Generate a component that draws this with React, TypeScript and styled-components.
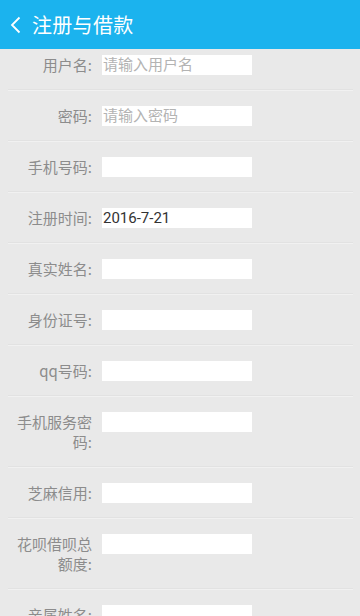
import React from "react";
import styled, { createGlobalStyle } from "styled-components";

const GlobalStyle = createGlobalStyle`
  html, body {
    margin: 0;
    padding: 0;
    background: #e9e9e9;
    font-family: "Roboto", "Noto Sans CJK SC", sans-serif;
  }
  body {
    height: 616px;
    overflow: hidden;
  }
`;

const Page = styled.div`
  width: 360px;
  min-height: 616px;
  background: #e9e9e9;
`;

const Header = styled.header`
  height: 49px;
  background: #1bb3ee;
  display: flex;
  align-items: center;
  padding-left: 10px;
  gap: 11px;
  color: #fff;
`;

const Title = styled.h1`
  margin: 0;
  font-size: 20px;
  font-weight: normal;
  font-family: "Noto Sans CJK SC", sans-serif;
  letter-spacing: 0.3px;
`;

const Form = styled.div`
  display: flex;
  flex-direction: column;
`;

const Row = styled.div<{ $first?: boolean }>`
  display: flex;
  align-items: flex-start;
  margin: 0 7px 0 8px;
  padding: ${(p) => (p.$first ? "6px" : "16px")} 0 14px;
  border-bottom: 1px solid #e2e2e2;
  box-shadow: 0 1px 0 #f1f1f1;
`;

const Label = styled.label`
  width: 78px;
  margin-left: 6px;
  margin-right: 10px;
  text-align: right;
  font-size: 15px;
  line-height: 20px;
  color: #8c8c8c;
  font-family: "Noto Sans CJK SC", sans-serif;
  word-break: break-all;
`;

const Field = styled.input`
  width: 150px;
  height: 20px;
  box-sizing: border-box;
  border: none;
  outline: none;
  padding: 0 1px;
  background: #fff;
  font-size: 15px;
  color: #333;
  font-family: "Roboto", "Noto Sans CJK SC", sans-serif;

  &::placeholder {
    color: #b3b3b3;
    font-family: "Noto Sans CJK SC", sans-serif;
  }
`;

const BackIcon = () => (
  <svg width="11" height="18" viewBox="0 0 11 18" fill="none">
    <path d="M9.5 1.5L2 9l7.5 7.5" stroke="#fff" strokeWidth="1.8" />
  </svg>
);

const fields: { label: string; placeholder?: string; value?: string }[] = [
  { label: "用户名:", placeholder: "请输入用户名" },
  { label: "密码:", placeholder: "请输入密码" },
  { label: "手机号码:" },
  { label: "注册时间:", value: "2016-7-21" },
  { label: "真实姓名:" },
  { label: "身份证号:" },
  { label: "qq号码:" },
  { label: "手机服务密码:" },
  { label: "芝麻信用:" },
  { label: "花呗借呗总额度:" },
  { label: "亲属姓名:" },
];

export default function App() {
  return (
    <>
      <GlobalStyle />
      <Page>
        <Header>
          <BackIcon />
          <Title>注册与借款</Title>
        </Header>
        <Form>
          {fields.map((f, i) => (
            <Row key={f.label} $first={i === 0}>
              <Label>{f.label}</Label>
              <Field
                placeholder={f.placeholder}
                defaultValue={f.value}
                type={f.label === "密码:" ? "text" : "text"}
              />
            </Row>
          ))}
        </Form>
      </Page>
    </>
  );
}
